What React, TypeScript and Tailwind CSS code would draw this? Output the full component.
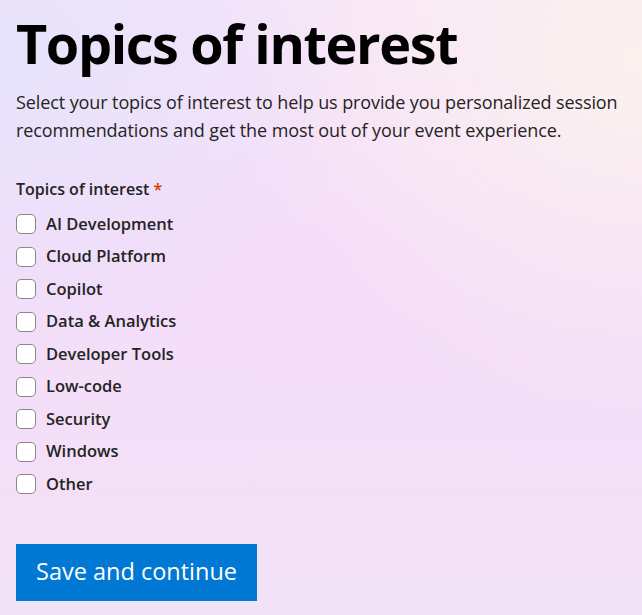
import React, { useState } from 'react';

const topics = [
  'AI Development',
  'Cloud Platform',
  'Copilot',
  'Data & Analytics',
  'Developer Tools',
  'Low-code',
  'Security',
  'Windows',
  'Other',
];

export default function App() {
  const [selected, setSelected] = useState<string[]>([]);

  const toggle = (t: string) =>
    setSelected((s) => (s.includes(t) ? s.filter((x) => x !== t) : [...s, t]));

  return (
    <div
      className="min-h-[615px] w-full px-4 pt-[9px] pb-4 text-[#111] bg-[radial-gradient(ellipse_at_0%_10%,#e6e3fb_0%,transparent_40%),radial-gradient(ellipse_at_100%_10%,#fbf1ee_0%,transparent_45%),linear-gradient(180deg,#f7e4f9_0%,#f5dcf9_40%,#f2e2f6_100%)]"
      style={{ fontFamily: '"Open Sans", "Noto Sans", sans-serif' }}
    >
      <h1 className="text-[54px] font-bold leading-[68px] tracking-[-1.4px] text-black">Topics of interest</h1>
      <p className="mt-[11px] text-[18px] leading-[28px] text-[#242424] tracking-[-0.1px]">
        Select your topics of interest to help us provide you personalized session recommendations and get the most out
        of your event experience.
      </p>

      <div className="mt-[34px]">
        <div className="text-[16px] font-semibold leading-[22px] text-[#242424]">
          Topics of interest <span className="text-[#d83b01]">*</span>
        </div>
        <div className="mt-[8px] flex flex-col">
          {topics.map((t) => (
            <label key={t} className="flex h-[32.5px] items-center gap-[10px] cursor-pointer">
              <input
                type="checkbox"
                checked={selected.includes(t)}
                onChange={() => toggle(t)}
                className="appearance-none h-[20px] w-[20px] rounded-[5px] border border-[#8a8886] bg-white checked:bg-[#0078d4] checked:border-[#0078d4]"
              />
              <span className="text-[16.5px] font-semibold text-[#242424]">{t}</span>
            </label>
          ))}
        </div>
      </div>

      <button className="mt-[43px] h-[57px] px-5 bg-[#0078d4] text-white text-[23.5px]">Save and continue</button>
    </div>
  );
}
